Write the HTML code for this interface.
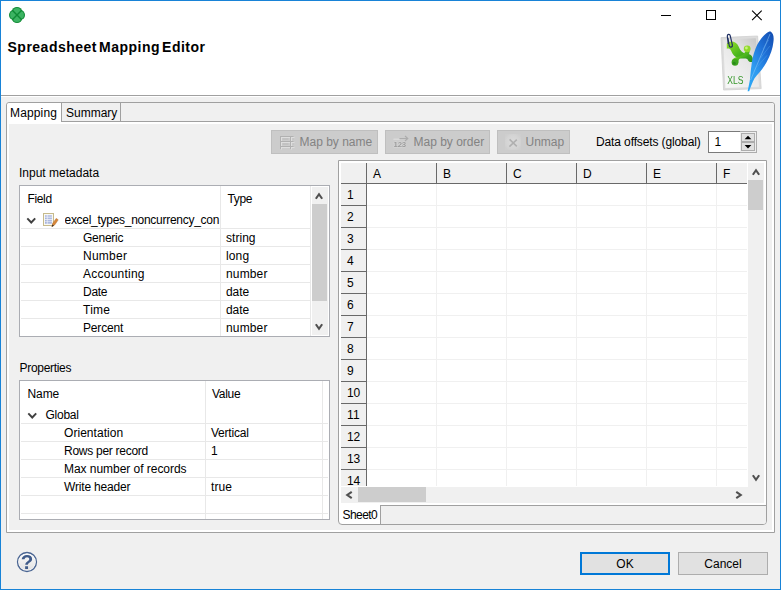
<!DOCTYPE html>
<html>
<head>
<meta charset="utf-8">
<title>Spreadsheet Mapping Editor</title>
<style>
html,body{margin:0;padding:0;}
body{width:781px;height:590px;overflow:hidden;background:#f0f0f0;position:relative;
  font-family:"Liberation Sans",sans-serif;font-size:12px;color:#000;}
.a{position:absolute;}
.t{position:absolute;white-space:nowrap;line-height:18px;height:18px;font-size:12px;}
#win{left:0;top:0;width:779px;height:588px;border:1px solid #1883d7;background:#f0f0f0;}
#head{left:1px;top:1px;width:779px;height:94px;background:#fff;}
#headline{left:1px;top:95px;width:779px;height:1px;background:#a0a0a0;}
#dtitle{left:7.5px;top:37px;font-weight:bold;font-size:14px;letter-spacing:0.5px;word-spacing:-2.4px;line-height:20px;height:20px;}
/* outer tab folder */
#tf{left:6px;top:102px;width:767px;height:429px;border:1px solid #a0a0a0;border-radius:3px 3px 0 0;background:#fff;}
#tfhead{left:7px;top:103px;width:767px;height:18px;background:#f0f0f0;border-bottom:1px solid #a0a0a0;border-radius:3px 3px 0 0;}
#tfbody{left:9px;top:124px;width:763px;height:406px;background:#f0f0f0;}
#tab1{left:7px;top:103px;width:54px;height:19px;background:#fff;border-right:1px solid #a0a0a0;border-radius:3px 0 0 0;}
#tab2{left:62px;top:103px;width:58px;height:18px;border-right:1px solid #a0a0a0;}
/* toolbar buttons */
.btn{position:absolute;top:130px;height:22px;border:1px solid #bfbfbf;background:#cccccc;color:#838383;}
.btn .t{top:2px;}
/* boxes */
.box{position:absolute;border:1px solid #abadb3;background:#fff;overflow:hidden;}
.hl{position:absolute;height:1px;background:#e8e8e8;left:0;}
.vl{position:absolute;width:1px;background:#e8e8e8;top:0;}
/* grid */
.gh{position:absolute;background:#f0f0f0;}
.dl{position:absolute;background:#696969;}
.push{position:absolute;height:21px;border:1px solid #adadad;background:#e1e1e1;}
</style>
</head>
<body>
<div class="a" id="win"></div>
<div class="a" id="head"></div>
<div class="a" id="headline"></div>
<div class="a" style="left:1px;top:96px;width:779px;height:1px;background:#fff"></div>

<!-- title bar icon -->
<svg class="a" style="left:9px;top:7px" width="16" height="16" viewBox="0 0 16 16">
  <g fill="#0f8a35">
    <ellipse cx="8" cy="4.6" rx="5.1" ry="4.6"/><ellipse cx="8" cy="11.4" rx="5.1" ry="4.6"/>
    <ellipse cx="4.6" cy="8" rx="4.6" ry="5.1"/><ellipse cx="11.4" cy="8" rx="4.6" ry="5.1"/>
  </g>
  <g fill="#3cb362">
    <ellipse cx="8" cy="4.6" rx="4" ry="3.5"/><ellipse cx="8" cy="11.4" rx="4" ry="3.5"/>
    <ellipse cx="4.6" cy="8" rx="3.5" ry="4"/><ellipse cx="11.4" cy="8" rx="3.5" ry="4"/>
    <rect x="4" y="4" width="8" height="8"/>
  </g>
  <path d="M3.3 3.3 L12.7 12.7 M12.7 3.3 L3.3 12.7" stroke="#0f8a35" stroke-width="1.4" fill="none"/>
</svg>

<!-- window controls -->
<svg class="a" style="left:655px;top:5px" width="120" height="22" viewBox="0 0 120 22">
  <path d="M6 10.5 H16" stroke="#000" stroke-width="1" fill="none"/>
  <rect x="51.5" y="5.5" width="9" height="9" stroke="#000" stroke-width="1" fill="none"/>
  <path d="M97.1 5.7 L106.7 15.1 M106.7 5.7 L97.1 15.1" stroke="#000" stroke-width="1.1" fill="none"/>
</svg>

<div class="t" id="dtitle">Spreadsheet Mapping Editor</div>

<!-- XLS icon -->
<svg class="a" id="xls" style="left:716px;top:28px;opacity:0.999" width="64" height="67" viewBox="0 0 64 67">
  <defs>
    <linearGradient id="pg" x1="1" y1="0" x2="0.2" y2="1">
      <stop offset="0" stop-color="#c4c4c4"/><stop offset="0.45" stop-color="#e6e6e6"/><stop offset="1" stop-color="#f6f6f6"/>
    </linearGradient>
    <linearGradient id="fg" x1="0.9" y1="0" x2="0.1" y2="1">
      <stop offset="0" stop-color="#1450b4"/><stop offset="0.35" stop-color="#1f72d8"/><stop offset="0.7" stop-color="#2f9cf0"/><stop offset="1" stop-color="#2aa6f6"/>
    </linearGradient>
    <linearGradient id="gg" x1="0" y1="0" x2="1" y2="1">
      <stop offset="0" stop-color="#9be02a"/><stop offset="0.5" stop-color="#4cb81e"/><stop offset="1" stop-color="#2a8f1c"/>
    </linearGradient>
  </defs>
  <!-- paper -->
  <path d="M5 9.6 L41.6 8 L45.2 60.6 L7.6 62 Z" fill="#dcdcdc" stroke="#d0d0d0" stroke-width="0.8"/>
  <path d="M7.2 11.6 L39.8 10.2 L43 58.8 L9.4 60 Z" fill="url(#pg)"/>
  <!-- green excel-like logo -->
  <path d="M10.8 15.8 C13.5 11.8 20.5 13.2 22.6 18.4 C24.2 23 27 25.4 31 25.8 C35.6 26 37.6 29.6 36.8 33.8 C34 34.8 32 33 31.5 31.2 C30.5 30 28 30.6 25 30.6 C19 30.2 16.4 26 15 22.6 C14 20.6 12.5 20.2 10.8 20.8 Z" fill="url(#gg)"/>
  <path d="M33.5 22.5 C34 26 31.5 29 27 29.5 C23.5 30 22.5 31.5 22.5 34 C22 37 18.5 38 16.5 36 C15 34 16 30.5 19.5 29.5 C23.5 28.5 27.5 27.5 29 24 Z" fill="url(#gg)"/>
  <circle cx="31.2" cy="20.8" r="3.4" fill="#8fd92a"/><circle cx="30.4" cy="20" r="1.4" fill="#c8f27a"/>
  <circle cx="19" cy="34.4" r="3.3" fill="#3da51f"/><circle cx="18.2" cy="35.2" r="1.5" fill="#2a8a1a"/>
  <!-- paperclip -->
  <path d="M12.2 15.5 L11.3 8.2 C11.1 6 13.8 5.6 14.2 7.6 L16.4 17 C16.8 19.4 13.6 19.9 13.2 17.6 L12 10.4" fill="none" stroke="#1f2f63" stroke-width="1.2" stroke-linecap="round"/>
  <filter id="idf" x="-0.1" y="-0.1" width="1.2" height="1.2"><feOffset dx="0" dy="0"/></filter><g filter="url(#idf)"><text transform="translate(11.2,55.6) scale(0.84,1)" font-family="Liberation Sans, sans-serif" font-size="10.2" fill="#35962a">XLS</text></g>
  <!-- feather -->
  <path d="M54.6 3.6 C57.2 5.2 58.2 9 57.4 14 C56.8 20 54.6 27 50.4 34.6 C46.6 41.4 41.6 46 38.4 50.4 C36.4 54 34.6 59 33.2 63.2 L31.6 63.2 C32.6 58.4 33.6 54 34 51 C34.4 46.6 34.8 42 35.4 38 C36 32 37 27.4 39.4 21 C41.8 14.6 46 8.6 50.4 5.2 C52 4 53.4 3.4 54.6 3.6 Z" fill="url(#fg)"/>
  <path d="M54 6 C50 16 43 32 34.6 52" fill="none" stroke="#8cc6f6" stroke-width="0.7" opacity="0.8"/>
  <path d="M52.6 12 L47 21 M53.8 18 L44.6 30 M51 27.4 L41.4 38.6" stroke="#5aa6ee" stroke-width="0.6" opacity="0.7" fill="none"/>
</svg>

<!-- tab folder -->
<div class="a" id="tf"></div>
<div class="a" id="tfhead"></div>
<div class="a" id="tfbody"></div>
<div class="a" id="tab1"></div>
<div class="a" id="tab2"></div>
<div class="t" style="left:10px;top:104px;letter-spacing:0.15px">Mapping</div>
<div class="t" style="left:66px;top:104px">Summary</div>

<!-- toolbar -->
<div class="btn" style="left:271px;width:105px">
<svg class="a" style="left:7px;top:4px" width="16" height="15" viewBox="0 0 16 15">
  <path d="M2.5 2.5V14.5M12.5 2.5V14.5M2 2.5H15.5M2 7.5H15.5M2 12.5H15.5" stroke="#dedede" stroke-width="1" fill="none"/>
  <path d="M1.5 1V14M11.5 1V14M1 1.5H14.5M1 6.5H14.5M1 11.5H14.5" stroke="#b1b1b1" stroke-width="1" fill="none"/>
  <path d="M3.5 4H9.5M3.5 9H9.5" stroke="#b8b8b8" stroke-width="1.2" fill="none"/>
  <path d="M13.5 4H15M13.5 9H15" stroke="#c0c0c0" stroke-width="1.2" fill="none"/>
</svg>
<div class="t" style="left:27.5px">Map by name</div></div>
<div class="btn" style="left:385px;width:103px">
<svg class="a" style="left:6px;top:3px;opacity:0.999" width="18" height="16" viewBox="0 0 18 16">
  <path d="M2 5.2H7" stroke="#dadada" stroke-width="1.6" stroke-linecap="round" fill="none"/>
  <path d="M7.5 4.5H15.5M13 2L15.8 4.5L13 7" stroke="#acacac" stroke-width="1.1" fill="none"/>
  <text x="1.6" y="12.7" font-family="Liberation Sans, sans-serif" font-weight="bold" font-size="7.8" letter-spacing="-0.25" fill="#9c9c9c" stroke="#d8d8d8" stroke-width="0.8" paint-order="stroke" filter="url(#idf)">123</text>
</svg>
<div class="t" style="left:27.5px">Map by order</div></div>
<div class="btn" style="left:497px;width:71px">
<svg class="a" style="left:7px;top:3px" width="16" height="16" viewBox="0 0 16 16">
  <defs><radialGradient id="ug" cx="0.5" cy="0.5" r="0.6"><stop offset="0" stop-color="#dbdbdb"/><stop offset="0.7" stop-color="#d4d4d4"/><stop offset="1" stop-color="#cecece"/></radialGradient></defs><rect x="0" y="0" width="16" height="16" fill="url(#ug)"/>
  <path d="M4.6 5.4 L11.8 12.4 M11.8 5.6 L4.4 12.6" stroke="#b0b0b0" stroke-width="1.5" fill="none"/>
</svg>
<div class="t" style="left:27.5px">Unmap</div></div>
<div class="t" style="left:596px;top:133px;letter-spacing:-0.12px">Data offsets (global)</div>
<div class="a" style="left:708px;top:131px;width:47px;height:20px;border:1px solid #7a7a7a;background:#fff"></div>
<div class="a" style="left:740px;top:131px;width:16px;height:20px;border:1px solid #adadad;border-left:none;background:#f0f0f0"></div>
<div class="a" style="left:741px;top:133px;width:12px;height:7px;border:1px solid #adadad;background:#e1e1e1"></div>
<div class="a" style="left:741px;top:142px;width:12px;height:7px;border:1px solid #adadad;background:#e1e1e1"></div>
<svg class="a" style="left:741px;top:133px" width="14" height="18" viewBox="0 0 14 18"><path d="M3.6 6.2 L7 2.8 L10.4 6.2 Z M3.6 12 L10.4 12 L7 15.4 Z" fill="#000"/></svg>
<div class="t" style="left:714.5px;top:133px">1</div>

<!-- input metadata -->
<div class="t" style="left:19px;top:164px">Input metadata</div>
<div class="box" id="meta" style="left:19px;top:185px;width:309px;height:150px">
<div class="hl" style="left:1px;top:42px;width:290px"></div>
<div class="hl" style="left:1px;top:60px;width:290px"></div>
<div class="hl" style="left:1px;top:78px;width:290px"></div>
<div class="hl" style="left:1px;top:96px;width:290px"></div>
<div class="hl" style="left:1px;top:114px;width:290px"></div>
<div class="hl" style="left:1px;top:132px;width:290px"></div>
<div class="vl" style="left:200px;height:150px"></div>
<div class="vl" style="left:290px;height:150px"></div>
<div class="t" style="left:7.5px;top:4px;letter-spacing:-0.36px">Field</div>
<div class="t" style="left:207.5px;top:4px;letter-spacing:-0.35px">Type</div>
<svg class="a" style="left:6.2px;top:31.3px" width="11" height="8" viewBox="0 0 11 8"><path d="M1.3 1.4 L5.25 5.5 L9.2 1.4" stroke="#404040" stroke-width="1.95" fill="none"/></svg>
<svg class="a" style="left:23px;top:27px" width="16" height="15" viewBox="0 0 16 15">
<rect x="0.5" y="0.5" width="10" height="12" fill="#fbfaf3" stroke="#c6ba8c"/>
<rect x="1.8" y="1.8" width="7.4" height="9.4" fill="#f4f5fb"/>
<path d="M2.1 3H3.7M2.1 5.3H3.7M2.1 7.6H3.7M2.1 9.9H3.7" stroke="#9dadd8" stroke-width="1.6"/>
<path d="M4.5 3H8.9M4.5 5.3H8.9M4.5 7.6H8.9M4.5 9.9H8.9" stroke="#aebbe0" stroke-width="1.6"/>
<path d="M8.8 13.8 L9.8 10.2 L13.2 5.4 L15.2 6.8 L11.8 11.8 Z" fill="#d8873a" stroke="#b36a2a" stroke-width="0.5"/><path d="M8.8 13.8 L9.4 11.6 L10.9 12.7Z" fill="#2a2a2a"/></svg>
<div class="t" style="left:44.5px;top:25px;letter-spacing:-0.28px;width:155.5px;overflow:hidden">excel_types_noncurrency_con</div>
<div class="t" style="left:63px;top:43px;letter-spacing:-0.26px">Generic</div><div class="t" style="left:206px;top:43px;letter-spacing:0.04px">string</div>
<div class="t" style="left:63px;top:61px;letter-spacing:0.25px">Number</div><div class="t" style="left:206px;top:61px;letter-spacing:0.13px">long</div>
<div class="t" style="left:63px;top:79px;letter-spacing:0.24px">Accounting</div><div class="t" style="left:206px;top:79px;letter-spacing:0.15px">number</div>
<div class="t" style="left:63px;top:97px;letter-spacing:-0.29px">Date</div><div class="t" style="left:206px;top:97px;letter-spacing:-0.06px">date</div>
<div class="t" style="left:63px;top:115px;letter-spacing:0.27px">Time</div><div class="t" style="left:206px;top:115px;letter-spacing:-0.06px">date</div>
<div class="t" style="left:63px;top:133px;letter-spacing:-0.18px">Percent</div><div class="t" style="left:206px;top:133px;letter-spacing:0.15px">number</div>
<div class="a" style="left:292px;top:1px;width:16px;height:148px;background:#f0f0f0"></div>
<div class="a" style="left:292px;top:18px;width:15px;height:97px;background:#cdcdcd"></div>
<svg class="a" style="left:292.4px;top:3.1px" width="14" height="14" viewBox="0 0 14 14"><path d="M3.85 9.75 L7.00 5.25 L10.15 9.75" stroke="#505050" stroke-width="2.1" fill="none"/></svg>
<svg class="a" style="left:292.4px;top:133.9px" width="14" height="14" viewBox="0 0 14 14"><path d="M3.85 4.25 L7.00 8.75 L10.15 4.25" stroke="#505050" stroke-width="2.1" fill="none"/></svg>
</div><!--/meta-->

<!-- properties -->
<div class="t" style="left:19.5px;top:359px;letter-spacing:-0.3px">Properties</div>
<div class="box" id="props" style="left:19px;top:380px;width:309px;height:138px">
<div class="hl" style="left:1px;top:42px;width:307px"></div>
<div class="hl" style="left:1px;top:60px;width:307px"></div>
<div class="hl" style="left:1px;top:78px;width:307px"></div>
<div class="hl" style="left:1px;top:96px;width:307px"></div>
<div class="hl" style="left:1px;top:114px;width:307px"></div>
<div class="hl" style="left:1px;top:132px;width:307px"></div>
<div class="vl" style="left:185px;height:138px"></div>
<div class="vl" style="left:302px;height:138px"></div>
<div class="t" style="left:7.5px;top:4px;letter-spacing:-0.10px">Name</div>
<div class="t" style="left:192px;top:4px;letter-spacing:-0.28px">Value</div>
<svg class="a" style="left:7.1px;top:31.2px" width="11" height="8" viewBox="0 0 11 8"><path d="M1.3 1.4 L5.25 5.5 L9.2 1.4" stroke="#404040" stroke-width="1.95" fill="none"/></svg>
<div class="t" style="left:25.5px;top:25px;letter-spacing:-0.25px">Global</div>
<div class="t" style="left:44px;top:43px;letter-spacing:0.05px">Orientation</div><div class="t" style="left:191px;top:43px;letter-spacing:-0.22px">Vertical</div>
<div class="t" style="left:44px;top:61px;letter-spacing:-0.27px">Rows per record</div><div class="t" style="left:191px;top:61px">1</div>
<div class="t" style="left:44px;top:79px;letter-spacing:-0.04px">Max number of records</div>
<div class="t" style="left:44px;top:97px;letter-spacing:-0.17px">Write header</div><div class="t" style="left:191px;top:97px;letter-spacing:0.06px">true</div>
</div><!--/props-->

<!-- grid -->
<div class="a" id="grid" style="left:338px;top:160px;width:427px;height:363px;border:1px solid #a0a0a0;background:#fff;border-radius:0 0 4px 4px;overflow:hidden">
<div class="gh" style="left:2px;top:2px;width:406px;height:20px"></div>
<div class="gh" style="left:2px;top:2px;width:25px;height:323px"></div>
<div class="vl" style="left:97px;top:23px;height:302px;background:#f0f0f0"></div>
<div class="vl" style="left:167px;top:23px;height:302px;background:#f0f0f0"></div>
<div class="vl" style="left:237px;top:23px;height:302px;background:#f0f0f0"></div>
<div class="vl" style="left:307px;top:23px;height:302px;background:#f0f0f0"></div>
<div class="vl" style="left:377px;top:23px;height:302px;background:#f0f0f0"></div>
<div class="hl" style="left:28px;top:44px;width:380px;background:#f0f0f0"></div>
<div class="hl" style="left:28px;top:66px;width:380px;background:#f0f0f0"></div>
<div class="hl" style="left:28px;top:88px;width:380px;background:#f0f0f0"></div>
<div class="hl" style="left:28px;top:110px;width:380px;background:#f0f0f0"></div>
<div class="hl" style="left:28px;top:132px;width:380px;background:#f0f0f0"></div>
<div class="hl" style="left:28px;top:154px;width:380px;background:#f0f0f0"></div>
<div class="hl" style="left:28px;top:176px;width:380px;background:#f0f0f0"></div>
<div class="hl" style="left:28px;top:198px;width:380px;background:#f0f0f0"></div>
<div class="hl" style="left:28px;top:220px;width:380px;background:#f0f0f0"></div>
<div class="hl" style="left:28px;top:242px;width:380px;background:#f0f0f0"></div>
<div class="hl" style="left:28px;top:264px;width:380px;background:#f0f0f0"></div>
<div class="hl" style="left:28px;top:286px;width:380px;background:#f0f0f0"></div>
<div class="hl" style="left:28px;top:308px;width:380px;background:#f0f0f0"></div>
<div class="dl" style="left:2px;top:22px;width:406px;height:1px"></div>
<div class="dl" style="left:27px;top:2px;width:1px;height:323px"></div>
<div class="dl" style="left:97px;top:2px;width:1px;height:21px"></div>
<div class="dl" style="left:167px;top:2px;width:1px;height:21px"></div>
<div class="dl" style="left:237px;top:2px;width:1px;height:21px"></div>
<div class="dl" style="left:307px;top:2px;width:1px;height:21px"></div>
<div class="dl" style="left:377px;top:2px;width:1px;height:21px"></div>
<div class="dl" style="left:2px;top:44px;width:26px;height:1px"></div>
<div class="dl" style="left:2px;top:66px;width:26px;height:1px"></div>
<div class="dl" style="left:2px;top:88px;width:26px;height:1px"></div>
<div class="dl" style="left:2px;top:110px;width:26px;height:1px"></div>
<div class="dl" style="left:2px;top:132px;width:26px;height:1px"></div>
<div class="dl" style="left:2px;top:154px;width:26px;height:1px"></div>
<div class="dl" style="left:2px;top:176px;width:26px;height:1px"></div>
<div class="dl" style="left:2px;top:198px;width:26px;height:1px"></div>
<div class="dl" style="left:2px;top:220px;width:26px;height:1px"></div>
<div class="dl" style="left:2px;top:242px;width:26px;height:1px"></div>
<div class="dl" style="left:2px;top:264px;width:26px;height:1px"></div>
<div class="dl" style="left:2px;top:286px;width:26px;height:1px"></div>
<div class="dl" style="left:2px;top:308px;width:26px;height:1px"></div>
<div class="t" style="left:34px;top:4px">A</div>
<div class="t" style="left:104px;top:4px">B</div>
<div class="t" style="left:174px;top:4px">C</div>
<div class="t" style="left:244px;top:4px">D</div>
<div class="t" style="left:314px;top:4px">E</div>
<div class="t" style="left:384px;top:4px">F</div>
<div class="t" style="left:8px;top:25px;letter-spacing:-0.27px">1</div>
<div class="t" style="left:8px;top:47px;letter-spacing:-0.27px">2</div>
<div class="t" style="left:8px;top:69px;letter-spacing:-0.27px">3</div>
<div class="t" style="left:8px;top:91px;letter-spacing:-0.27px">4</div>
<div class="t" style="left:8px;top:113px;letter-spacing:-0.27px">5</div>
<div class="t" style="left:8px;top:135px;letter-spacing:-0.27px">6</div>
<div class="t" style="left:8px;top:157px;letter-spacing:-0.27px">7</div>
<div class="t" style="left:8px;top:179px;letter-spacing:-0.27px">8</div>
<div class="t" style="left:8px;top:201px;letter-spacing:-0.27px">9</div>
<div class="t" style="left:8px;top:223px;letter-spacing:-0.27px">10</div>
<div class="t" style="left:8px;top:245px;letter-spacing:0.17px">11</div>
<div class="t" style="left:8px;top:267px;letter-spacing:-0.27px">12</div>
<div class="t" style="left:8px;top:289px;letter-spacing:-0.27px">13</div>
<div class="t" style="left:8px;top:311px;letter-spacing:-0.27px">14</div>
<div class="a" style="left:409px;top:2px;width:16px;height:340px;background:#f0f0f0"></div>
<div class="a" style="left:2px;top:326px;width:423px;height:16px;background:#f0f0f0"></div>
<div class="a" style="left:409px;top:19px;width:15px;height:30px;background:#cdcdcd"></div>
<div class="a" style="left:19px;top:326px;width:68px;height:15px;background:#cdcdcd"></div>
<svg class="a" style="left:409.6px;top:3.9px" width="14" height="14" viewBox="0 0 14 14"><path d="M3.85 9.75 L7.00 5.25 L10.15 9.75" stroke="#505050" stroke-width="2.1" fill="none"/></svg>
<svg class="a" style="left:409.6px;top:309.7px" width="14" height="14" viewBox="0 0 14 14"><path d="M3.85 4.25 L7.00 8.75 L10.15 4.25" stroke="#505050" stroke-width="2.1" fill="none"/></svg>
<svg class="a" style="left:3.2px;top:326.5px" width="14" height="14" viewBox="0 0 14 14"><path d="M9.75 3.85 L5.25 7.00 L9.75 10.15" stroke="#505050" stroke-width="2.1" fill="none"/></svg>
<svg class="a" style="left:392.9px;top:326.5px" width="14" height="14" viewBox="0 0 14 14"><path d="M4.25 3.85 L8.75 7.00 L4.25 10.15" stroke="#505050" stroke-width="2.1" fill="none"/></svg>
<div class="a" style="left:41px;top:344px;width:386px;height:18px;background:#f0f0f0;border-top:1px solid #a0a0a0;border-left:1px solid #a0a0a0"></div>
<div class="t" style="left:3.5px;top:345px;letter-spacing:-0.57px">Sheet0</div>
</div><!--/grid-->

<!-- help icon -->
<svg class="a" style="left:14px;top:549px;opacity:0.999" width="26" height="26" viewBox="0 0 26 26">
  <defs><linearGradient id="hg" x1="0" y1="0" x2="0" y2="1"><stop offset="0" stop-color="#fafafa"/><stop offset="1" stop-color="#e2e2e2"/></linearGradient></defs>
  <circle cx="13" cy="13" r="9.5" fill="#fff" stroke="#4a6592" stroke-width="1.3"/>
  <circle cx="13" cy="13" r="8.3" fill="url(#hg)"/>
  <g filter="url(#idf)"><text x="13" y="20" text-anchor="middle" font-family="Liberation Sans, sans-serif" font-weight="bold" font-size="20.5" fill="#3f5b8a">?</text></g>
</svg>
<!-- bottom -->
<div class="push" style="left:580px;top:552px;width:86px;border:2px solid #0078d7;height:19px"><div class="t" style="left:0;width:86px;text-align:center;top:1px">OK</div></div>
<div class="push" style="left:678px;top:552px;width:88px"><div class="t" style="left:0;width:88px;text-align:center;top:2px">Cancel</div></div>
</body>
</html>
